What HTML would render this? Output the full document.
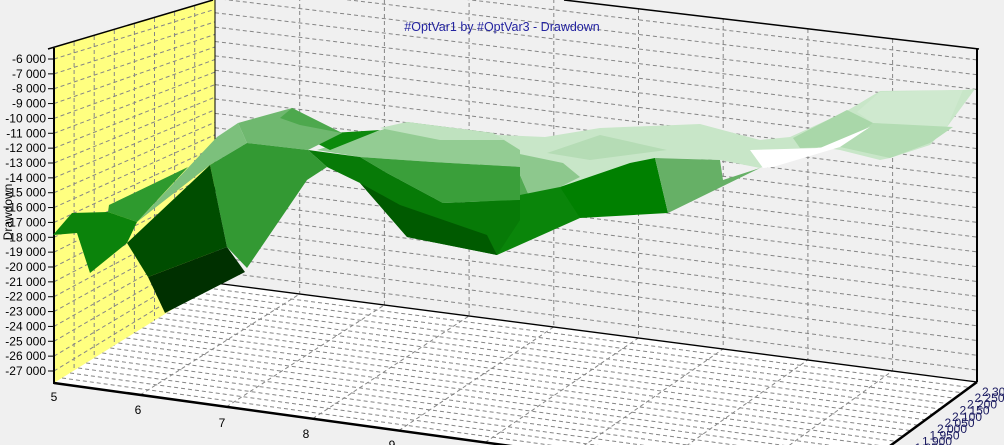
<!DOCTYPE html>
<html><head><meta charset="utf-8"><style>
html,body{margin:0;padding:0;background:#f0f0f0;overflow:hidden;width:1004px;height:445px}
svg{display:block}
text{font-family:"Liberation Sans",sans-serif}
</style></head><body>
<svg id="s" width="1004" height="445" viewBox="0 0 1004 445" xmlns="http://www.w3.org/2000/svg">
<rect width="1004" height="445" fill="#f0f0f0"/>
<polygon points="54,48 212,0 215,0 215,283 54,383" fill="#ffff80"/>
<polygon points="54,383 215,283 977,382 830,490" fill="#ffffff"/>
<g id="grid" stroke="#858585" stroke-width="1" stroke-dasharray="4,3" fill="none"></g>
<g stroke="#000" fill="none">
<line x1="215" y1="0" x2="215" y2="283" stroke-width="1"/>
<line x1="215" y1="283" x2="977" y2="382" stroke-width="1.3"/>
<line x1="48" y1="49" x2="213" y2="0" stroke-width="1.5"/>
<line x1="564" y1="0" x2="979" y2="49" stroke-width="1.5"/>
<line x1="977" y1="49" x2="977" y2="382" stroke-width="2"/>
<line x1="54" y1="48" x2="54" y2="384" stroke-width="2"/>
<line x1="54" y1="383" x2="830" y2="490" stroke-width="2.5"/>
<line x1="977" y1="382" x2="830" y2="490" stroke-width="2.5"/>
</g>
<g stroke="none">
<polygon fill="#c8e6c8" points="480,133 500,135 545,137 600,128 700,124 760,140 790,137 845,112 880,91 963,90 975,89 947,127 930,145 890,158 880,160 840,150 820,147 780,160 760,168 720,160 660,158 580,187 480,205"/>
<polygon fill="#cfe9cf" points="880,92 963,90 947,127 873,123 857,112"/>
<polygon fill="#a9d7a9" points="847,110 873,123 867,130 840,147 800,148 793,138"/>
<polygon fill="#b3dcb3" points="873,123 953,127 930,143 890,158 840,147"/>
<polygon fill="#ffffff" points="750,150 820,148 870,127 840,147 773,167 763,168"/>
<polygon fill="#b5dcb5" points="600,135 667,150 590,160 547,153"/>
<polygon fill="#52aa52" points="480,147 510,152 530,198 480,203"/>
<polygon fill="#8dc88d" points="510,152 563,163 580,177 560,187 530,198"/>
<polygon fill="#008000" points="560,187 630,163 655,158 668,213 580,218 567,207"/>
<polygon fill="#0a850a" points="480,203 560,187 580,218 497,255 480,250"/>
<polygon fill="#66b066" points="655,158 720,160 723,180 760,168 668,213"/>
<polygon fill="#93cc93" points="317,150 407,122 493,133 520,150 520,167 433,162 360,157"/>
<polygon fill="#bfe2bf" points="380,128 407,122 493,133 505,140 440,140"/>
<polygon fill="#3a9f3a" points="360,157 433,162 520,167 520,200 443,203 387,173"/>
<polygon fill="#077a07" points="308,150 360,157 387,173 443,203 520,200 520,220 497,255 407,237 360,183 327,167"/>
<polygon fill="#005a00" points="360,183 407,237 497,255 487,235 400,205"/>
<polygon fill="#0c8a0c" points="300,135 380,130 330,150"/>
<polygon fill="#6fb86f" points="238,123 292,108 342,133 308,150 247,143"/>
<polygon fill="#4da84d" points="280,118 292,108 342,133 300,125"/>
<polygon fill="#7cc07c" points="137,222 217,137 238,123 247,143 210,165"/>
<polygon fill="#339933" points="210,165 247,143 308,150 327,167 307,180 247,268 227,247"/>
<polygon fill="#2e9a2e" points="109,205 188,167 137,222 108,212"/>
<polygon fill="#0b830b" points="53,235 72,213 108,212 137,222 127,243 90,273 77,233"/>
<polygon fill="#004d00" points="127,243 210,165 227,247 148,277"/>
<polygon fill="#003000" points="148,277 227,247 245,272 165,313"/>
</g>
<text x="502" y="31" text-anchor="middle" font-size="12.5" fill="#2323a0">#OptVar1 by #OptVar3 - Drawdown</text>
<text transform="translate(12,212) rotate(-90)" text-anchor="middle" font-size="12" fill="#000">Drawdown</text>
<g id="yl" font-size="12" fill="#000" text-anchor="end"></g>
<g font-size="12" fill="#000" text-anchor="middle">
<text x="54" y="401">5</text><text x="138" y="414">6</text><text x="222" y="427">7</text><text x="306" y="438">8</text><text x="392" y="449">9</text>
</g>
<g id="zl" font-size="12" fill="#1a1a60"></g>
</svg>
<script>
var NS="http://www.w3.org/2000/svg",g=document.getElementById('grid');
function L(x1,y1,x2,y2,p){var l=document.createElementNS(NS,'line');l.setAttribute('x1',x1);l.setAttribute('y1',y1);l.setAttribute('x2',x2);l.setAttribute('y2',y2);(p||g).appendChild(l);}
for(var i=0;i<22;i++){var y=59+14.857*i;
 L(54,y,215,(y-48)*283/335);
 L(215,-41+(y-48)*324/335,977,49+(y-48)*333/335);}
for(var s=1;s<8;s++){var x=54+s*20.1;L(x,48-48*(x-54)/161,x,383-100*(x-54)/161);}
for(var k=1;k<9;k++){var x=215+84.7*k;L(x,-41+90*(x-215)/762,x,283+99*(x-215)/762);}
var P00=[54,383],P10=[830,490],P01=[215,283],P11=[977,382];
function lp(a,b,t){return[a[0]+(b[0]-a[0])*t,a[1]+(b[1]-a[1])*t];}
for(var v=1;v<20;v++){var a=lp(P00,P01,v/20),b=lp(P10,P11,v/20);L(a[0],a[1],b[0],b[1]);}
for(var k=1;k<9;k++){var a=lp(P00,P10,k/9),b=lp(P01,P11,k/9);L(a[0],a[1],b[0],b[1]);}
var yl=document.getElementById('yl');
for(var i=0;i<22;i++){var y=59+14.857*i,t=document.createElementNS(NS,'text');t.setAttribute('x',46);t.setAttribute('y',y+4);t.textContent='-'+(6+i)+' 000';yl.appendChild(t);
 var tk=document.createElementNS(NS,'line');tk.setAttribute('x1',48);tk.setAttribute('x2',54);tk.setAttribute('y1',y);tk.setAttribute('y2',y);tk.setAttribute('stroke','#000');yl.appendChild(tk);}
var zl=document.getElementById('zl'),vals=['2 300','2 250','2 200','2 150','2 100','2 050','2 000','1 950','1 900','1 850'];
for(var j=0;j<vals.length;j++){var t=document.createElementNS(NS,'text');t.setAttribute('x',982-7.5*j);t.setAttribute('y',396+6.2*j);t.textContent=vals[j];zl.appendChild(t);}
</script>
</body></html>
